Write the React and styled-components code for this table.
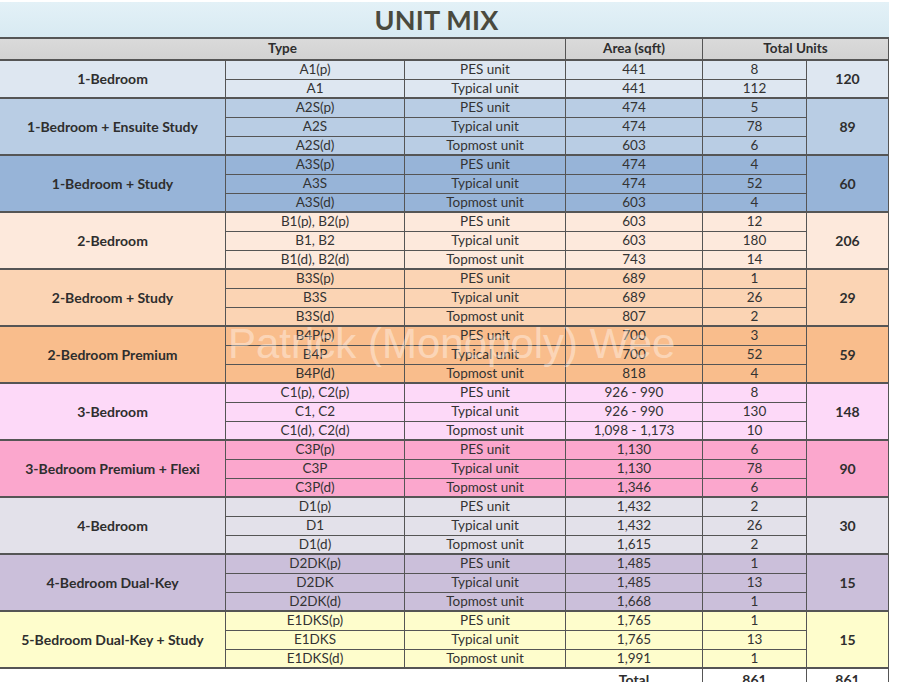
import React from "react";
import styled, { createGlobalStyle } from "styled-components";

const Global = createGlobalStyle`
  html, body { margin: 0; padding: 0; background: #ffffff; }
  body { font-family: Lato, "Open Sans", sans-serif; }
`;

const Page = styled.div`
  position: relative;
  width: 900px;
`;

const TitleBar = styled.div`
  width: 889px;
  height: 35px;
  margin-top: 2px;
  box-sizing: border-box;
  padding-right: 16px;
  display: flex;
  align-items: center;
  justify-content: center;
  background: linear-gradient(180deg, #e3f1f7 0%, #d8eaf2 100%);
  font: 700 27px Lato, sans-serif;
  color: #4a4a3e;
  letter-spacing: 0.2px;
`;

const Grid = styled.div`
  display: grid;
  width: 889px;
  grid-template-columns: 226px 179px 161px 137px 104px 82px;
  grid-template-rows: 22px repeat(32, 19px) 22px;
  border-top: 2px solid #565656;
`;

const Cell = styled.div`
  box-sizing: border-box;
  display: flex;
  align-items: center;
  justify-content: center;
  background: ${(p) => p.$bg || "transparent"};
  border-right: 1px solid #555;
  border-bottom: ${(p) => (p.$last ? "2px" : "1px")} solid #555;
  font-size: 13.5px;
  color: #333;
  white-space: nowrap;
  line-height: 1;
`;

const HeadCell = styled(Cell)`
  grid-column: span ${(p) => p.$span || 1};
  background: linear-gradient(180deg, #dadada 0%, #d2d2d2 100%);
  border-bottom: 2px solid #555;
  font-weight: 700;
  font-size: 13.5px;
  color: #2e2e2e;
`;

const GroupCell = styled(Cell)`
  grid-row: span ${(p) => p.$span};
  border-bottom: 2px solid #555;
  font-weight: 700;
  font-size: 14px;
  color: #2e2e2e;
`;

const Spacer = styled.div`
  grid-column: span 3;
`;

const TotalCell = styled(Cell)`
  background: #fff;
  border-bottom: none;
  font-weight: 700;
  font-size: 14px;
  color: #2e2e2e;
`;

const Watermark = styled.div`
  position: absolute;
  left: 228px;
  top: 318px;
  font: 400 42px "Liberation Sans", Arial, sans-serif;
  color: rgba(255, 255, 255, 0.4);
  white-space: nowrap;
  pointer-events: none;
`;

const groups = [
  { name: "1-Bedroom", bg: "#dee7f1", total: 120, rows: [["A1(p)", "PES unit", "441", "8"], ["A1", "Typical unit", "441", "112"]] },
  { name: "1-Bedroom + Ensuite Study", bg: "#b9cde4", total: 89, rows: [["A2S(p)", "PES unit", "474", "5"], ["A2S", "Typical unit", "474", "78"], ["A2S(d)", "Topmost unit", "603", "6"]] },
  { name: "1-Bedroom + Study", bg: "#97b4d8", total: 60, rows: [["A3S(p)", "PES unit", "474", "4"], ["A3S", "Typical unit", "474", "52"], ["A3S(d)", "Topmost unit", "603", "4"]] },
  { name: "2-Bedroom", bg: "#fde9dc", total: 206, rows: [["B1(p), B2(p)", "PES unit", "603", "12"], ["B1, B2", "Typical unit", "603", "180"], ["B1(d), B2(d)", "Topmost unit", "743", "14"]] },
  { name: "2-Bedroom + Study", bg: "#fbd4b4", total: 29, rows: [["B3S(p)", "PES unit", "689", "1"], ["B3S", "Typical unit", "689", "26"], ["B3S(d)", "Topmost unit", "807", "2"]] },
  { name: "2-Bedroom Premium", bg: "#f9bd8c", total: 59, rows: [["B4P(p)", "PES unit", "700", "3"], ["B4P", "Typical unit", "700", "52"], ["B4P(d)", "Topmost unit", "818", "4"]] },
  { name: "3-Bedroom", bg: "#fdd9f8", total: 148, rows: [["C1(p), C2(p)", "PES unit", "926 - 990", "8"], ["C1, C2", "Typical unit", "926 - 990", "130"], ["C1(d), C2(d)", "Topmost unit", "1,098 - 1,173", "10"]] },
  { name: "3-Bedroom Premium + Flexi", bg: "#fba7cd", total: 90, rows: [["C3P(p)", "PES unit", "1,130", "6"], ["C3P", "Typical unit", "1,130", "78"], ["C3P(d)", "Topmost unit", "1,346", "6"]] },
  { name: "4-Bedroom", bg: "#e3e1ea", total: 30, rows: [["D1(p)", "PES unit", "1,432", "2"], ["D1", "Typical unit", "1,432", "26"], ["D1(d)", "Topmost unit", "1,615", "2"]] },
  { name: "4-Bedroom Dual-Key", bg: "#cbbfda", total: 15, rows: [["D2DK(p)", "PES unit", "1,485", "1"], ["D2DK", "Typical unit", "1,485", "13"], ["D2DK(d)", "Topmost unit", "1,668", "1"]] },
  { name: "5-Bedroom Dual-Key + Study", bg: "#fefdcc", total: 15, rows: [["E1DKS(p)", "PES unit", "1,765", "1"], ["E1DKS", "Typical unit", "1,765", "13"], ["E1DKS(d)", "Topmost unit", "1,991", "1"]] },
];

export default function App() {
  const cells = [];
  groups.forEach((g, gi) => {
    const n = g.rows.length;
    g.rows.forEach((r, ri) => {
      const last = ri === n - 1;
      if (ri === 0) {
        cells.push(
          <GroupCell key={`g${gi}`} $span={n} $bg={g.bg}>
            {g.name}
          </GroupCell>
        );
      }
      r.forEach((v, ci) => {
        cells.push(
          <Cell key={`c${gi}-${ri}-${ci}`} $bg={g.bg} $last={last}>
            {v}
          </Cell>
        );
      });
      if (ri === 0) {
        cells.push(
          <GroupCell key={`t${gi}`} $span={n} $bg={g.bg}>
            {g.total}
          </GroupCell>
        );
      }
    });
  });

  return (
    <Page>
      <Global />
      <TitleBar>UNIT MIX</TitleBar>
      <Grid>
        <HeadCell $span={3}>Type</HeadCell>
        <HeadCell>Area (sqft)</HeadCell>
        <HeadCell $span={2}>Total Units</HeadCell>
        {cells}
        <Spacer />
        <TotalCell>Total</TotalCell>
        <TotalCell>861</TotalCell>
        <TotalCell>861</TotalCell>
      </Grid>
      <Watermark>Patrick (Monopoly) Wee</Watermark>
    </Page>
  );
}
